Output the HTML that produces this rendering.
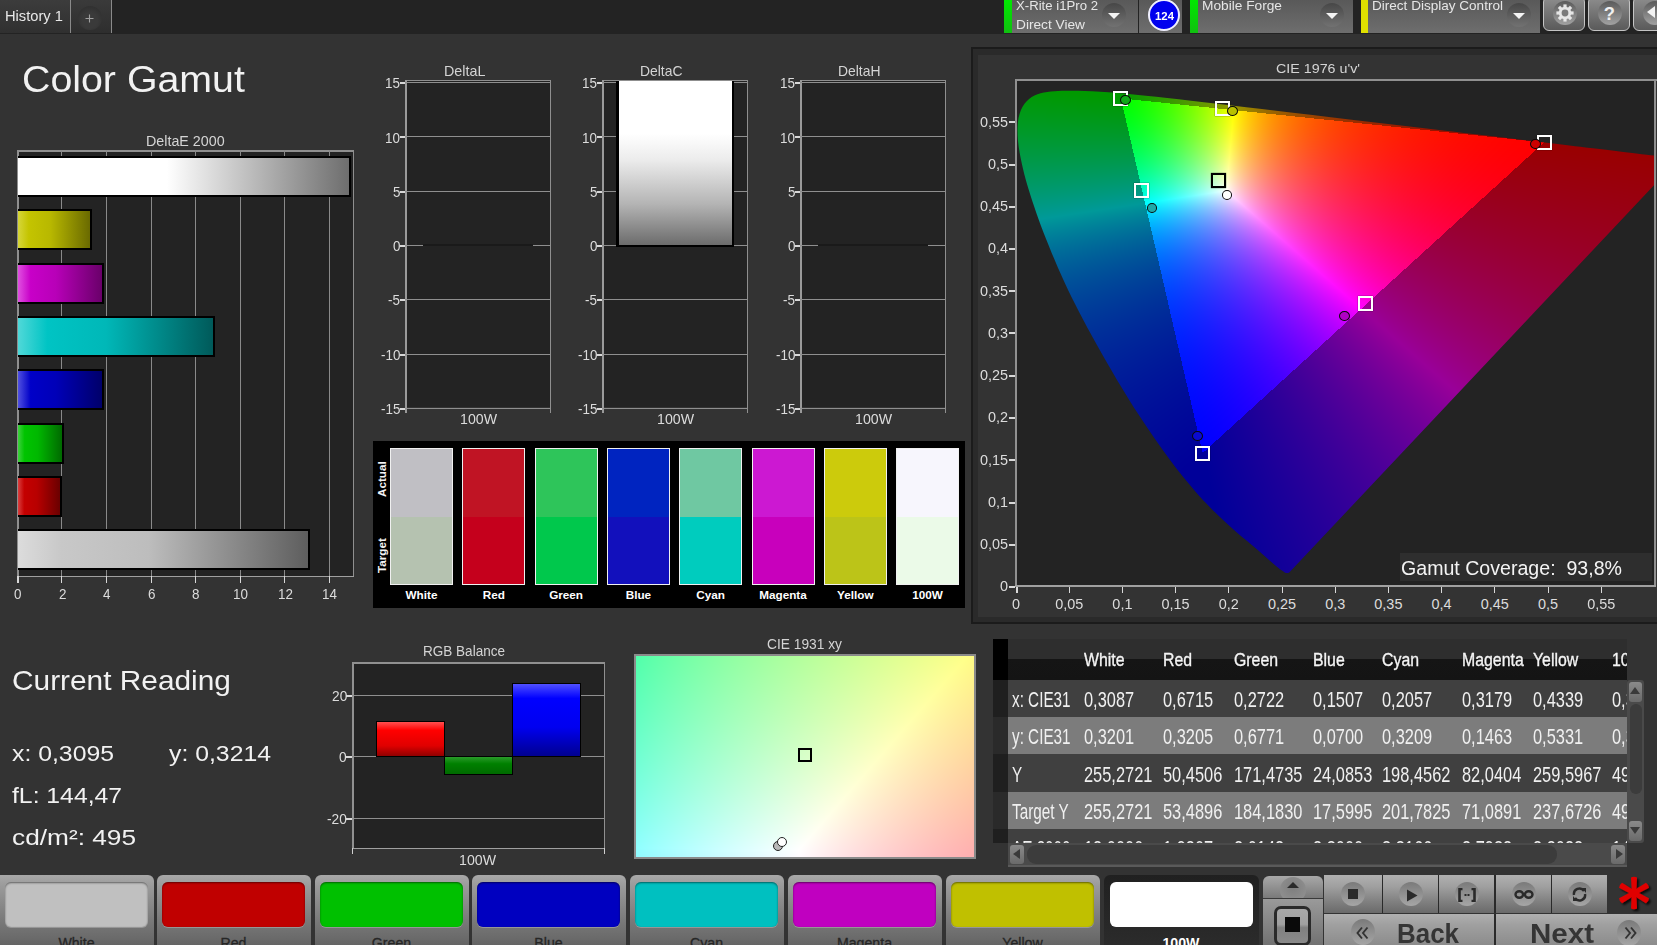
<!DOCTYPE html><html><head><meta charset="utf-8"><style>
html,body{margin:0;padding:0;}
body{width:1657px;height:945px;overflow:hidden;position:relative;background:#333333;font-family:"Liberation Sans",sans-serif;}
.t{position:absolute;white-space:nowrap;line-height:1;transform-origin:0 0;}
</style></head><body>
<div style="position:absolute;left:0px;top:0px;width:1657px;height:34px;background:#232323"></div>
<div style="position:absolute;left:0px;top:0px;width:70px;height:33px;background:linear-gradient(#3c3c3c,#303030)"></div>
<div style="position:absolute;left:70px;top:0px;width:1px;height:33px;background:#8a8a8a"></div>
<div style="position:absolute;left:71px;top:0px;width:40px;height:33px;background:linear-gradient(#3a3a3a,#2e2e2e)"></div>
<div style="position:absolute;left:111px;top:0px;width:1px;height:33px;background:#8a8a8a"></div>
<div style="position:absolute;left:78px;top:6px;width:24px;height:24px;border-radius:50%;background:radial-gradient(circle at 50% 60%,#3a3a3a 40%,#2a2a2a 100%)"></div>
<svg style="position:absolute;left:84px;top:13px" width="11" height="11" viewBox="0 0 11 11"><path d="M5.5 1.5 V9.5 M1.5 5.5 H9.5" stroke="#a0a0a0" stroke-width="1.1"/></svg>
<div class="t" style="left:5.00px;top:9.13px;font-size:14.03px;color:#e8e8e8;transform:scaleX(1.0480);">History 1</div>
<div style="position:absolute;left:1004px;top:0px;width:8px;height:33px;background:linear-gradient(#00e800,#10c010)"></div>
<div style="position:absolute;left:1012px;top:0px;width:126px;height:33px;background:linear-gradient(#595959,#6e6e6e)"></div>
<div class="t" style="left:1016.00px;top:-1.29px;font-size:13.33px;color:#e6e6e6;transform:scaleX(0.9881);">X-Rite i1Pro 2</div>
<div class="t" style="left:1016.00px;top:17.71px;font-size:13.33px;color:#e6e6e6;transform:scaleX(1.0271);">Direct View</div>
<div style="position:absolute;left:1102px;top:3px;width:24px;height:24px;border-radius:50%;background:linear-gradient(#474747,#727272)"></div>
<div style="position:absolute;left:1108px;top:13px;width:0;height:0;border-left:6px solid transparent;border-right:6px solid transparent;border-top:6px solid #f4f4f4"></div>
<div style="position:absolute;left:1139px;top:0px;width:43px;height:33px;background:linear-gradient(#595959,#6e6e6e)"></div>
<div style="position:absolute;left:1147.5px;top:-1px;width:32px;height:32px;box-sizing:border-box;border-radius:50%;background:#0000ee;border:2px solid #f0f0ff"></div>
<div class="t" style="left:1154.50px;top:9.62px;font-size:11.67px;color:#ffffff;font-weight:bold;transform:scaleX(0.9762);">124</div>
<div style="position:absolute;left:1190px;top:0px;width:8px;height:33px;background:linear-gradient(#00e800,#10c010)"></div>
<div style="position:absolute;left:1198px;top:0px;width:155px;height:33px;background:linear-gradient(#595959,#6e6e6e)"></div>
<div class="t" style="left:1202.00px;top:-1.29px;font-size:13.33px;color:#e6e6e6;transform:scaleX(1.0282);">Mobile Forge</div>
<div style="position:absolute;left:1320px;top:3px;width:24px;height:24px;border-radius:50%;background:linear-gradient(#474747,#727272)"></div>
<div style="position:absolute;left:1326px;top:13px;width:0;height:0;border-left:6px solid transparent;border-right:6px solid transparent;border-top:6px solid #f4f4f4"></div>
<div style="position:absolute;left:1361px;top:0px;width:7px;height:33px;background:#e0e000"></div>
<div style="position:absolute;left:1368px;top:0px;width:172px;height:33px;background:linear-gradient(#595959,#6e6e6e)"></div>
<div class="t" style="left:1372.00px;top:-1.29px;font-size:13.33px;color:#e6e6e6;transform:scaleX(1.0161);">Direct Display Control</div>
<div style="position:absolute;left:1507px;top:3px;width:24px;height:24px;border-radius:50%;background:linear-gradient(#474747,#727272)"></div>
<div style="position:absolute;left:1513px;top:13px;width:0;height:0;border-left:6px solid transparent;border-right:6px solid transparent;border-top:6px solid #f4f4f4"></div>
<div style="position:absolute;left:1543px;top:-4px;width:42px;height:35px;box-sizing:border-box;border:1.3px solid #c4c4c4;border-radius:6px;background:linear-gradient(#8e8e8e,#5a5a5a)"></div>
<div style="position:absolute;left:1552.5px;top:1px;width:24px;height:24px;border-radius:50%;background:linear-gradient(#5a5a5a,#a2a2a2)"></div>
<div style="position:absolute;left:1588px;top:-4px;width:42px;height:35px;box-sizing:border-box;border:1.3px solid #c4c4c4;border-radius:6px;background:linear-gradient(#8e8e8e,#5a5a5a)"></div>
<div style="position:absolute;left:1597.5px;top:1px;width:24px;height:24px;border-radius:50%;background:linear-gradient(#5a5a5a,#a2a2a2)"></div>
<div style="position:absolute;left:1633px;top:-4px;width:42px;height:35px;box-sizing:border-box;border:1.3px solid #c4c4c4;border-radius:6px;background:linear-gradient(#8e8e8e,#5a5a5a)"></div>
<div style="position:absolute;left:1642.5px;top:1px;width:24px;height:24px;border-radius:50%;background:linear-gradient(#5a5a5a,#a2a2a2)"></div>
<svg style="position:absolute;left:1552.5px;top:1px" width="24" height="24" viewBox="-12 -12 24 24"><g fill="#e6e6e6"><rect x="-1.6" y="-8.6" width="3.2" height="4" transform="rotate(0)"/><rect x="-1.6" y="-8.6" width="3.2" height="4" transform="rotate(45)"/><rect x="-1.6" y="-8.6" width="3.2" height="4" transform="rotate(90)"/><rect x="-1.6" y="-8.6" width="3.2" height="4" transform="rotate(135)"/><rect x="-1.6" y="-8.6" width="3.2" height="4" transform="rotate(180)"/><rect x="-1.6" y="-8.6" width="3.2" height="4" transform="rotate(225)"/><rect x="-1.6" y="-8.6" width="3.2" height="4" transform="rotate(270)"/><rect x="-1.6" y="-8.6" width="3.2" height="4" transform="rotate(315)"/><circle r="6.2"/></g><circle r="3.4" fill="#7a7a7a"/></svg>
<div class="t" style="left:1603.80px;top:4.68px;font-size:18.33px;color:#f0f0f0;font-weight:bold;">?</div>
<div style="position:absolute;left:1647px;top:6px;width:0;height:0;border-top:6.5px solid transparent;border-bottom:6.5px solid transparent;border-right:8px solid #f2f2f2"></div>
<div class="t" style="left:22.00px;top:61.73px;font-size:36.94px;color:#f2f2f2;transform:scaleX(1.0649);">Color Gamut</div>
<div class="t" style="left:146.25px;top:133.18px;font-size:15.14px;color:#d4d4d4;transform:scaleX(0.9446);">DeltaE 2000</div>
<div style="position:absolute;left:17px;top:150px;width:336px;height:426px;background:#232323"></div>
<div style="position:absolute;left:17px;top:150px;width:337px;height:2px;background:#8f8f8f"></div>
<div style="position:absolute;left:17px;top:150px;width:2px;height:426px;background:#8f8f8f"></div>
<div style="position:absolute;left:353px;top:150px;width:1px;height:426px;background:#8f8f8f"></div>
<div style="position:absolute;left:17px;top:576px;width:337px;height:1px;background:#a0a0a0"></div>
<div style="position:absolute;left:61px;top:150px;width:1px;height:426px;background:#8a8a8a"></div>
<div style="position:absolute;left:106px;top:150px;width:1px;height:426px;background:#8a8a8a"></div>
<div style="position:absolute;left:151px;top:150px;width:1px;height:426px;background:#8a8a8a"></div>
<div style="position:absolute;left:195px;top:150px;width:1px;height:426px;background:#8a8a8a"></div>
<div style="position:absolute;left:240px;top:150px;width:1px;height:426px;background:#8a8a8a"></div>
<div style="position:absolute;left:284px;top:150px;width:1px;height:426px;background:#8a8a8a"></div>
<div style="position:absolute;left:329px;top:150px;width:1px;height:426px;background:#8a8a8a"></div>
<div style="position:absolute;left:17px;top:576px;width:2px;height:7px;background:#d8d8d8"></div>
<div class="t" style="left:13.96px;top:586.07px;font-size:15.28px;color:#dcdcdc;transform:scaleX(0.8800);">0</div>
<div style="position:absolute;left:61px;top:576px;width:1px;height:7px;background:#d8d8d8"></div>
<div class="t" style="left:58.56px;top:586.07px;font-size:15.28px;color:#dcdcdc;transform:scaleX(0.8800);">2</div>
<div style="position:absolute;left:106px;top:576px;width:1px;height:7px;background:#d8d8d8"></div>
<div class="t" style="left:103.16px;top:586.07px;font-size:15.28px;color:#dcdcdc;transform:scaleX(0.8800);">4</div>
<div style="position:absolute;left:151px;top:576px;width:1px;height:7px;background:#d8d8d8"></div>
<div class="t" style="left:147.76px;top:586.07px;font-size:15.28px;color:#dcdcdc;transform:scaleX(0.8800);">6</div>
<div style="position:absolute;left:195px;top:576px;width:1px;height:7px;background:#d8d8d8"></div>
<div class="t" style="left:192.36px;top:586.07px;font-size:15.28px;color:#dcdcdc;transform:scaleX(0.8800);">8</div>
<div style="position:absolute;left:240px;top:576px;width:1px;height:7px;background:#d8d8d8"></div>
<div class="t" style="left:233.22px;top:586.07px;font-size:15.28px;color:#dcdcdc;transform:scaleX(0.8800);">10</div>
<div style="position:absolute;left:284px;top:576px;width:1px;height:7px;background:#d8d8d8"></div>
<div class="t" style="left:277.82px;top:586.07px;font-size:15.28px;color:#dcdcdc;transform:scaleX(0.8800);">12</div>
<div style="position:absolute;left:329px;top:576px;width:1px;height:7px;background:#d8d8d8"></div>
<div class="t" style="left:322.42px;top:586.07px;font-size:15.28px;color:#dcdcdc;transform:scaleX(0.8800);">14</div>
<div style="position:absolute;left:18px;top:156px;width:333px;height:41px;box-sizing:border-box;border:2px solid #000;border-left:none;background:linear-gradient(to right,#ffffff 0%,#ffffff 8%,#ffffff 45%,#6e6e6e 100%)"></div>
<div style="position:absolute;left:18px;top:209px;width:74px;height:41px;box-sizing:border-box;border:2px solid #000;border-left:none;background:linear-gradient(to right,#d6d63a 0%,#c4c400 15%,#b8b800 45%,#6a6a00 100%)"></div>
<div style="position:absolute;left:18px;top:263px;width:86px;height:41px;box-sizing:border-box;border:2px solid #000;border-left:none;background:linear-gradient(to right,#e050e0 0%,#c800c8 15%,#b800b8 45%,#6a006a 100%)"></div>
<div style="position:absolute;left:18px;top:316px;width:197px;height:41px;box-sizing:border-box;border:2px solid #000;border-left:none;background:linear-gradient(to right,#50d8d8 0%,#00c4c4 15%,#00b8b8 45%,#005a5a 100%)"></div>
<div style="position:absolute;left:18px;top:369px;width:86px;height:41px;box-sizing:border-box;border:2px solid #000;border-left:none;background:linear-gradient(to right,#5050e0 0%,#0000c8 15%,#0000b8 45%,#00006a 100%)"></div>
<div style="position:absolute;left:18px;top:423px;width:46px;height:41px;box-sizing:border-box;border:2px solid #000;border-left:none;background:linear-gradient(to right,#40d040 0%,#00c400 15%,#00b800 45%,#006a00 100%)"></div>
<div style="position:absolute;left:18px;top:476px;width:44px;height:41px;box-sizing:border-box;border:2px solid #000;border-left:none;background:linear-gradient(to right,#d84040 0%,#c40000 15%,#b80000 45%,#6a0000 100%)"></div>
<div style="position:absolute;left:18px;top:529px;width:292px;height:41px;box-sizing:border-box;border:2px solid #000;border-left:none;background:linear-gradient(to right,#dcdcdc 0%,#c8c8c8 15%,#bdbdbd 45%,#5e5e5e 100%)"></div>
<div class="t" style="left:443.80px;top:63.30px;font-size:15.00px;color:#d4d4d4;transform:scaleX(0.9549);">DeltaL</div>
<div style="position:absolute;left:405px;top:80px;width:145px;height:327px;background:#232323"></div>
<div style="position:absolute;left:405px;top:80px;width:146px;height:1px;background:#8f8f8f"></div>
<div style="position:absolute;left:405px;top:80px;width:2px;height:333px;background:#9a9a9a"></div>
<div style="position:absolute;left:550px;top:80px;width:1px;height:333px;background:#8f8f8f"></div>
<div style="position:absolute;left:400px;top:82px;width:150px;height:1px;background:#8f8f8f"></div>
<div style="position:absolute;left:400px;top:82px;width:5px;height:2px;background:#d8d8d8"></div>
<div class="t" style="left:385.05px;top:75.27px;font-size:15.28px;color:#dcdcdc;transform:scaleX(0.8800);">15</div>
<div style="position:absolute;left:400px;top:136px;width:150px;height:1px;background:#8f8f8f"></div>
<div style="position:absolute;left:400px;top:136px;width:5px;height:2px;background:#d8d8d8"></div>
<div class="t" style="left:385.05px;top:129.57px;font-size:15.28px;color:#dcdcdc;transform:scaleX(0.8800);">10</div>
<div style="position:absolute;left:400px;top:191px;width:150px;height:1px;background:#8f8f8f"></div>
<div style="position:absolute;left:400px;top:191px;width:5px;height:2px;background:#d8d8d8"></div>
<div class="t" style="left:392.52px;top:183.87px;font-size:15.28px;color:#dcdcdc;transform:scaleX(0.8800);">5</div>
<div style="position:absolute;left:400px;top:245px;width:150px;height:1px;background:#8f8f8f"></div>
<div style="position:absolute;left:400px;top:245px;width:5px;height:2px;background:#d8d8d8"></div>
<div class="t" style="left:392.52px;top:238.17px;font-size:15.28px;color:#dcdcdc;transform:scaleX(0.8800);">0</div>
<div style="position:absolute;left:400px;top:299px;width:150px;height:1px;background:#8f8f8f"></div>
<div style="position:absolute;left:400px;top:299px;width:5px;height:2px;background:#d8d8d8"></div>
<div class="t" style="left:388.05px;top:292.47px;font-size:15.28px;color:#dcdcdc;transform:scaleX(0.8800);">-5</div>
<div style="position:absolute;left:400px;top:354px;width:150px;height:1px;background:#8f8f8f"></div>
<div style="position:absolute;left:400px;top:354px;width:5px;height:2px;background:#d8d8d8"></div>
<div class="t" style="left:380.57px;top:346.77px;font-size:15.28px;color:#dcdcdc;transform:scaleX(0.8800);">-10</div>
<div style="position:absolute;left:400px;top:408px;width:150px;height:1px;background:#8f8f8f"></div>
<div style="position:absolute;left:400px;top:408px;width:5px;height:2px;background:#d8d8d8"></div>
<div class="t" style="left:380.57px;top:401.07px;font-size:15.28px;color:#dcdcdc;transform:scaleX(0.8800);">-15</div>
<div class="t" style="left:459.50px;top:411.54px;font-size:14.72px;color:#dcdcdc;transform:scaleX(0.9621);">100W</div>
<div style="position:absolute;left:423px;top:244px;width:110px;height:2px;background:#1a1a1a"></div>
<div class="t" style="left:640.25px;top:63.30px;font-size:15.00px;color:#d4d4d4;transform:scaleX(0.9270);">DeltaC</div>
<div style="position:absolute;left:602px;top:80px;width:145px;height:327px;background:#232323"></div>
<div style="position:absolute;left:602px;top:80px;width:146px;height:1px;background:#8f8f8f"></div>
<div style="position:absolute;left:602px;top:80px;width:2px;height:333px;background:#9a9a9a"></div>
<div style="position:absolute;left:747px;top:80px;width:1px;height:333px;background:#8f8f8f"></div>
<div style="position:absolute;left:597px;top:82px;width:150px;height:1px;background:#8f8f8f"></div>
<div style="position:absolute;left:597px;top:82px;width:5px;height:2px;background:#d8d8d8"></div>
<div class="t" style="left:582.05px;top:75.27px;font-size:15.28px;color:#dcdcdc;transform:scaleX(0.8800);">15</div>
<div style="position:absolute;left:597px;top:136px;width:150px;height:1px;background:#8f8f8f"></div>
<div style="position:absolute;left:597px;top:136px;width:5px;height:2px;background:#d8d8d8"></div>
<div class="t" style="left:582.05px;top:129.57px;font-size:15.28px;color:#dcdcdc;transform:scaleX(0.8800);">10</div>
<div style="position:absolute;left:597px;top:191px;width:150px;height:1px;background:#8f8f8f"></div>
<div style="position:absolute;left:597px;top:191px;width:5px;height:2px;background:#d8d8d8"></div>
<div class="t" style="left:589.52px;top:183.87px;font-size:15.28px;color:#dcdcdc;transform:scaleX(0.8800);">5</div>
<div style="position:absolute;left:597px;top:245px;width:150px;height:1px;background:#8f8f8f"></div>
<div style="position:absolute;left:597px;top:245px;width:5px;height:2px;background:#d8d8d8"></div>
<div class="t" style="left:589.52px;top:238.17px;font-size:15.28px;color:#dcdcdc;transform:scaleX(0.8800);">0</div>
<div style="position:absolute;left:597px;top:299px;width:150px;height:1px;background:#8f8f8f"></div>
<div style="position:absolute;left:597px;top:299px;width:5px;height:2px;background:#d8d8d8"></div>
<div class="t" style="left:585.05px;top:292.47px;font-size:15.28px;color:#dcdcdc;transform:scaleX(0.8800);">-5</div>
<div style="position:absolute;left:597px;top:354px;width:150px;height:1px;background:#8f8f8f"></div>
<div style="position:absolute;left:597px;top:354px;width:5px;height:2px;background:#d8d8d8"></div>
<div class="t" style="left:577.57px;top:346.77px;font-size:15.28px;color:#dcdcdc;transform:scaleX(0.8800);">-10</div>
<div style="position:absolute;left:597px;top:408px;width:150px;height:1px;background:#8f8f8f"></div>
<div style="position:absolute;left:597px;top:408px;width:5px;height:2px;background:#d8d8d8"></div>
<div class="t" style="left:577.57px;top:401.07px;font-size:15.28px;color:#dcdcdc;transform:scaleX(0.8800);">-15</div>
<div class="t" style="left:656.50px;top:411.54px;font-size:14.72px;color:#dcdcdc;transform:scaleX(0.9621);">100W</div>
<div style="position:absolute;left:616px;top:81px;width:118px;height:166px;box-sizing:border-box;border:2px solid #000;border-left-width:3px;border-top:none;background:linear-gradient(#ffffff 0%,#ffffff 32%,#ececec 48%,#b4b4b4 75%,#6c6c6c 100%)"></div>
<div class="t" style="left:838.25px;top:63.30px;font-size:15.00px;color:#d4d4d4;transform:scaleX(0.9270);">DeltaH</div>
<div style="position:absolute;left:800px;top:80px;width:145px;height:327px;background:#232323"></div>
<div style="position:absolute;left:800px;top:80px;width:146px;height:1px;background:#8f8f8f"></div>
<div style="position:absolute;left:800px;top:80px;width:2px;height:333px;background:#9a9a9a"></div>
<div style="position:absolute;left:945px;top:80px;width:1px;height:333px;background:#8f8f8f"></div>
<div style="position:absolute;left:795px;top:82px;width:150px;height:1px;background:#8f8f8f"></div>
<div style="position:absolute;left:795px;top:82px;width:5px;height:2px;background:#d8d8d8"></div>
<div class="t" style="left:780.05px;top:75.27px;font-size:15.28px;color:#dcdcdc;transform:scaleX(0.8800);">15</div>
<div style="position:absolute;left:795px;top:136px;width:150px;height:1px;background:#8f8f8f"></div>
<div style="position:absolute;left:795px;top:136px;width:5px;height:2px;background:#d8d8d8"></div>
<div class="t" style="left:780.05px;top:129.57px;font-size:15.28px;color:#dcdcdc;transform:scaleX(0.8800);">10</div>
<div style="position:absolute;left:795px;top:191px;width:150px;height:1px;background:#8f8f8f"></div>
<div style="position:absolute;left:795px;top:191px;width:5px;height:2px;background:#d8d8d8"></div>
<div class="t" style="left:787.52px;top:183.87px;font-size:15.28px;color:#dcdcdc;transform:scaleX(0.8800);">5</div>
<div style="position:absolute;left:795px;top:245px;width:150px;height:1px;background:#8f8f8f"></div>
<div style="position:absolute;left:795px;top:245px;width:5px;height:2px;background:#d8d8d8"></div>
<div class="t" style="left:787.52px;top:238.17px;font-size:15.28px;color:#dcdcdc;transform:scaleX(0.8800);">0</div>
<div style="position:absolute;left:795px;top:299px;width:150px;height:1px;background:#8f8f8f"></div>
<div style="position:absolute;left:795px;top:299px;width:5px;height:2px;background:#d8d8d8"></div>
<div class="t" style="left:783.05px;top:292.47px;font-size:15.28px;color:#dcdcdc;transform:scaleX(0.8800);">-5</div>
<div style="position:absolute;left:795px;top:354px;width:150px;height:1px;background:#8f8f8f"></div>
<div style="position:absolute;left:795px;top:354px;width:5px;height:2px;background:#d8d8d8"></div>
<div class="t" style="left:775.57px;top:346.77px;font-size:15.28px;color:#dcdcdc;transform:scaleX(0.8800);">-10</div>
<div style="position:absolute;left:795px;top:408px;width:150px;height:1px;background:#8f8f8f"></div>
<div style="position:absolute;left:795px;top:408px;width:5px;height:2px;background:#d8d8d8"></div>
<div class="t" style="left:775.57px;top:401.07px;font-size:15.28px;color:#dcdcdc;transform:scaleX(0.8800);">-15</div>
<div class="t" style="left:854.50px;top:411.54px;font-size:14.72px;color:#dcdcdc;transform:scaleX(0.9621);">100W</div>
<div style="position:absolute;left:818px;top:244px;width:110px;height:2px;background:#1a1a1a"></div>
<div style="position:absolute;left:373px;top:441px;width:592px;height:167px;background:#000"></div>
<div style="position:absolute;left:390.0px;top:448px;width:63px;height:137px;box-sizing:border-box;border:1px solid #f0f0f0;background:linear-gradient(#c0bfc4 0%,#c0bfc4 50%,#b5c2b0 50%,#b5c2b0 100%)"></div>
<div class="t" style="left:405.53px;top:589.47px;font-size:11.74px;color:#ffffff;font-weight:bold;">White</div>
<div style="position:absolute;left:462.3px;top:448px;width:63px;height:137px;box-sizing:border-box;border:1px solid #f0f0f0;background:linear-gradient(#c01424 0%,#c01424 50%,#c5001c 50%,#c5001c 100%)"></div>
<div class="t" style="left:482.71px;top:589.47px;font-size:11.74px;color:#ffffff;font-weight:bold;">Red</div>
<div style="position:absolute;left:534.6px;top:448px;width:63px;height:137px;box-sizing:border-box;border:1px solid #f0f0f0;background:linear-gradient(#2ec55a 0%,#2ec55a 50%,#00c84c 50%,#00c84c 100%)"></div>
<div class="t" style="left:549.14px;top:589.47px;font-size:11.74px;color:#ffffff;font-weight:bold;">Green</div>
<div style="position:absolute;left:606.9px;top:448px;width:63px;height:137px;box-sizing:border-box;border:1px solid #f0f0f0;background:linear-gradient(#0024c0 0%,#0024c0 50%,#1210bc 50%,#1210bc 100%)"></div>
<div class="t" style="left:625.68px;top:589.47px;font-size:11.74px;color:#ffffff;font-weight:bold;">Blue</div>
<div style="position:absolute;left:679.2px;top:448px;width:63px;height:137px;box-sizing:border-box;border:1px solid #f0f0f0;background:linear-gradient(#6fc8a2 0%,#6fc8a2 50%,#00ccbe 50%,#00ccbe 100%)"></div>
<div class="t" style="left:696.35px;top:589.47px;font-size:11.74px;color:#ffffff;font-weight:bold;">Cyan</div>
<div style="position:absolute;left:751.5px;top:448px;width:63px;height:137px;box-sizing:border-box;border:1px solid #f0f0f0;background:linear-gradient(#cc18d2 0%,#cc18d2 50%,#c800bc 50%,#c800bc 100%)"></div>
<div class="t" style="left:759.20px;top:589.47px;font-size:11.74px;color:#ffffff;font-weight:bold;">Magenta</div>
<div style="position:absolute;left:823.8px;top:448px;width:63px;height:137px;box-sizing:border-box;border:1px solid #f0f0f0;background:linear-gradient(#cccb0c 0%,#cccb0c 50%,#bcc418 50%,#bcc418 100%)"></div>
<div class="t" style="left:837.04px;top:589.47px;font-size:11.74px;color:#ffffff;font-weight:bold;">Yellow</div>
<div style="position:absolute;left:896.1px;top:448px;width:63px;height:137px;box-sizing:border-box;border:1px solid #f0f0f0;background:linear-gradient(#f7f6fd 0%,#f7f6fd 50%,#ebfae8 50%,#ebfae8 100%)"></div>
<div class="t" style="left:912.27px;top:589.47px;font-size:11.74px;color:#ffffff;font-weight:bold;">100W</div>
<div class="t" style="left:376.4px;top:496.6px;font-size:11.7px;font-weight:bold;color:#f4f4f4;transform:rotate(-90deg);transform-origin:0 0;">Actual</div>
<div class="t" style="left:376.4px;top:573px;font-size:11.7px;font-weight:bold;color:#f4f4f4;transform:rotate(-90deg);transform-origin:0 0;">Target</div>
<div style="position:absolute;left:971px;top:47px;width:686px;height:577px;background:#1b1b1b"></div>
<div style="position:absolute;left:973px;top:49px;width:684px;height:573px;background:#2a2a2a"></div>
<div style="position:absolute;left:978px;top:55px;width:679px;height:562px;background:#333333"></div>
<div class="t" style="left:1276.00px;top:62.48px;font-size:13.61px;color:#d4d4d4;transform:scaleX(1.0487);">CIE 1976 u'v'</div>
<div style="position:absolute;left:1015px;top:79px;width:641px;height:508px;background:#232323"></div>
<div style="position:absolute;left:1015px;top:79px;width:642px;height:2px;background:#909090"></div>
<div style="position:absolute;left:1015px;top:79px;width:2px;height:508px;background:#909090"></div>
<div style="position:absolute;left:1654px;top:79px;width:2px;height:508px;background:#909090"></div>
<div style="position:absolute;left:1015px;top:585px;width:641px;height:2px;background:#a0a0a0"></div>
<svg id="ciefb" style="position:absolute;left:1017px;top:81px" width="637" height="504" viewBox="2 2 637 504"><defs><linearGradient id="fg1" x1="0" y1="0" x2="0" y2="1"><stop offset="0" stop-color="#009000"/><stop offset="0.3" stop-color="#009030"/><stop offset="0.4" stop-color="#008f8a"/><stop offset="0.75" stop-color="#0020a0"/><stop offset="1" stop-color="#1000a0"/></linearGradient><linearGradient id="fg2" x1="0" y1="1" x2="1" y2="0"><stop offset="0" stop-color="#1800a0"/><stop offset="0.5" stop-color="#980098"/><stop offset="1" stop-color="#a00010"/></linearGradient><linearGradient id="fg3" x1="0" y1="0" x2="1" y2="0.4"><stop offset="0" stop-color="#00ff00"/><stop offset="0.35" stop-color="#ffff00"/><stop offset="1" stop-color="#ff0000"/></linearGradient><linearGradient id="fg4" x1="0" y1="0" x2="0" y2="1"><stop offset="0.45" stop-color="#0000ff" stop-opacity="0"/><stop offset="1" stop-color="#0000ff"/></linearGradient><radialGradient id="fg5" gradientUnits="userSpaceOnUse" cx="211.5" cy="111.8" r="150"><stop offset="0" stop-color="#ffffff"/><stop offset="1" stop-color="#ffffff" stop-opacity="0"/></radialGradient></defs><polygon points="274.24,493.48 274.06,493.48 273.83,493.76 273.47,493.76 273.06,494.03 272.53,494.04 271.82,494.04 270.94,494.05 269.35,493.23 266.59,491.34 262.87,488.38 257.49,483.88 250.71,477.92 242.13,470.59 230.89,461.07 217.35,449.38 200.73,433.89 180.78,412.91 154.30,379.92 123.03,334.80 89.12,278.65 56.47,217.93 30.96,159.63 13.65,110.48 4.70,73.96 2.53,48.53 5.94,31.05 14.07,19.96 25.60,14.30 39.31,12.21 54.26,11.69 69.45,11.89 85.29,12.65 102.37,13.92 120.91,15.65 141.30,17.78 163.90,20.28 188.89,23.16 216.56,26.39 246.97,29.98 280.13,33.93 315.90,38.18 353.75,42.65 392.62,47.29 430.30,51.76 466.97,56.11 500.20,60.02 529.56,63.52 554.55,66.50 575.47,68.96 593.12,71.07 608.42,72.89 621.35,74.43 631.81,75.65 639.93,76.61 646.25,77.37 650.97,77.93 654.06,78.30 656.60,78.60 658.58,78.83 660.57,79.07 662.28,79.28 663.43,79.41 664.00,79.48 664.29,79.52" fill="url(#fg1)"/><polygon points="187.6,374.1 529.2,63.4 664.3,79.5 274.2,493.5" fill="url(#fg2)"/><polygon points="529.2,63.4 105.9,19.3 187.6,374.1" fill="url(#fg3)"/><polygon points="529.2,63.4 105.9,19.3 187.6,374.1" fill="url(#fg4)"/><polygon points="529.2,63.4 105.9,19.3 187.6,374.1" fill="url(#fg5)"/></svg>
<canvas id="cie" width="637" height="504" style="position:absolute;left:1017px;top:81px"></canvas>
<script>
(function(){
var L=[[0.1741,0.005],[0.174,0.005],[0.1738,0.0049],[0.1736,0.0049],[0.1733,0.0048],[0.173,0.0048],[0.1726,0.0048],[0.1721,0.0048],[0.1714,0.0051],[0.1703,0.0058],[0.1689,0.0069],[0.1669,0.0086],[0.1644,0.0109],[0.1611,0.0138],[0.1566,0.0177],[0.151,0.0227],[0.144,0.0297],[0.1355,0.0399],[0.1241,0.0578],[0.1096,0.0868],[0.0913,0.1327],[0.0687,0.2007],[0.0454,0.295],[0.0235,0.4127],[0.0082,0.5384],[0.0039,0.6548],[0.0139,0.7502],[0.0389,0.812],[0.0743,0.8338],[0.1142,0.8262],[0.1547,0.8059],[0.1929,0.7816],[0.2296,0.7543],[0.2658,0.7243],[0.3016,0.6923],[0.3373,0.6589],[0.3731,0.6245],[0.4087,0.5896],[0.4441,0.5547],[0.4788,0.5202],[0.5125,0.4866],[0.5448,0.4544],[0.5752,0.4242],[0.6029,0.3965],[0.627,0.3725],[0.6482,0.3514],[0.6658,0.334],[0.6801,0.3197],[0.6915,0.3083],[0.7006,0.2993],[0.7079,0.292],[0.714,0.2859],[0.719,0.2809],[0.723,0.277],[0.726,0.274],[0.7283,0.2717],[0.73,0.27],[0.7311,0.2689],[0.732,0.268],[0.7327,0.2673],[0.7334,0.2666],[0.734,0.266],[0.7344,0.2656],[0.7346,0.2654],[0.7347,0.2653]];
var cv=document.getElementById('cie');var ctx=cv.getContext('2d');
var OX=1017,OY=81,U0=1016.000000,SU=1064.000000,V0=586.500000,SV=845.000000;
function uv(x,y){var d=-2*x+12*y+3;return [4*x/d,9*y/d];}
ctx.beginPath();
var P=[];for(var i=0;i<L.length;i++){var p=uv(L[i][0],L[i][1]);P.push([U0+SU*p[0]-OX,V0-SV*p[1]-OY]);}
var n=P.length;ctx.moveTo(P[0][0],P[0][1]);
for(var i=0;i<n-1;i++){var p0=P[Math.max(i-1,0)],p1=P[i],p2=P[i+1],p3=P[Math.min(i+2,n-1)];
ctx.bezierCurveTo(p1[0]+(p2[0]-p0[0])/6,p1[1]+(p2[1]-p0[1])/6,p2[0]-(p3[0]-p1[0])/6,p2[1]-(p3[1]-p1[1])/6,p2[0],p2[1]);}
ctx.closePath();
var W=cv.width,H=cv.height;
var off=document.createElement('canvas');off.width=W;off.height=H;var oc=off.getContext('2d');
var img=oc.createImageData(W,H);var d=img.data;
// P3 D65 XYZ->RGB
var M=[[2.4934969,-0.9313836,-0.4027108],[-0.8294890,1.7626641,0.0236247],[0.0358458,-0.0761724,0.9568845]];
var GAM=1.250000, DARK=0.600000;
for(var py=0;py<H;py++){for(var pxx=0;pxx<W;pxx++){
  var u=(pxx+OX+0.5-U0)/SU, v=(V0-(py+OY+0.5))/SV;
  if(v<=0.0001)v=0.0001;
  var x=9*u/(6*u-16*v+12), y=4*v/(6*u-16*v+12);
  var X=x/y, Y=1, Z=(1-x-y)/y;
  var r=M[0][0]*X+M[0][1]*Y+M[0][2]*Z, g=M[1][0]*X+M[1][1]*Y+M[1][2]*Z, b=M[2][0]*X+M[2][1]*Y+M[2][2]*Z;
  var inside=(r>=0&&g>=0&&b>=0);
  if(r<0)r=0;if(g<0)g=0;if(b<0)b=0;
  var m=Math.max(r,g,b); if(m<=0)m=1;
  r/=m;g/=m;b/=m;
  if(inside){r=Math.pow(r,GAM);g=Math.pow(g,GAM);b=Math.pow(b,GAM);}
  var k=inside?1:DARK;
  var o=(py*W+pxx)*4;d[o]=r*255*k;d[o+1]=g*255*k;d[o+2]=b*255*k;d[o+3]=255;
}}
oc.putImageData(img,0,0);
ctx.save();ctx.clip();ctx.drawImage(off,0,0);ctx.restore();var fb=document.getElementById('ciefb');if(fb)fb.style.display='none';
})();
</script>
<div style="position:absolute;left:1536.7px;top:134.9px;width:15px;height:15px;box-sizing:border-box;border:2px solid #ffffff;box-shadow:0 0 1px rgba(0,0,0,0.8)"></div>
<div style="position:absolute;left:1113.4px;top:90.8px;width:15px;height:15px;box-sizing:border-box;border:2px solid #ffffff;box-shadow:0 0 1px rgba(0,0,0,0.8)"></div>
<div style="position:absolute;left:1195.1px;top:445.6px;width:15px;height:15px;box-sizing:border-box;border:2px solid #ffffff;box-shadow:0 0 1px rgba(0,0,0,0.8)"></div>
<div style="position:absolute;left:1134.0px;top:182.9px;width:15px;height:15px;box-sizing:border-box;border:2px solid #ffffff;box-shadow:0 0 1px rgba(0,0,0,0.8)"></div>
<div style="position:absolute;left:1357.5px;top:296.0px;width:15px;height:15px;box-sizing:border-box;border:2px solid #ffffff;box-shadow:0 0 1px rgba(0,0,0,0.8)"></div>
<div style="position:absolute;left:1214.5px;top:101.0px;width:15px;height:15px;box-sizing:border-box;border:2px solid #ffffff;box-shadow:0 0 1px rgba(0,0,0,0.8)"></div>
<div style="position:absolute;left:1210.9px;top:172.9px;width:15px;height:15px;box-sizing:border-box;border:2px solid #000000;box-shadow:0 0 1px rgba(0,0,0,0.8)"></div>
<div style="position:absolute;left:1221.8px;top:190.4px;width:10.5px;height:10px;box-sizing:border-box;border-radius:50%;border:1.6px solid #0a0a0a;background:#ffffff"></div>
<div style="position:absolute;left:1530.1px;top:138.6px;width:10.5px;height:10px;box-sizing:border-box;border-radius:50%;border:1.6px solid #0a0a0a;background:#cc0000"></div>
<div style="position:absolute;left:1120.2px;top:94.8px;width:10.5px;height:10px;box-sizing:border-box;border-radius:50%;border:1.6px solid #0a0a0a;background:#10a818"></div>
<div style="position:absolute;left:1192.0px;top:431.1px;width:10.5px;height:10px;box-sizing:border-box;border-radius:50%;border:1.6px solid #0a0a0a;background:#0a0ad0"></div>
<div style="position:absolute;left:1146.7px;top:202.5px;width:10.5px;height:10px;box-sizing:border-box;border-radius:50%;border:1.6px solid #0a0a0a;background:#20a8a8"></div>
<div style="position:absolute;left:1339.2px;top:311.4px;width:10.5px;height:10px;box-sizing:border-box;border-radius:50%;border:1.6px solid #0a0a0a;background:#b000c4"></div>
<div style="position:absolute;left:1227.3px;top:106.2px;width:10.5px;height:10px;box-sizing:border-box;border-radius:50%;border:1.6px solid #0a0a0a;background:#b8c000"></div>
<div style="position:absolute;left:1009px;top:586px;width:6px;height:2px;background:#d8d8d8"></div>
<div class="t" style="left:999.97px;top:579.47px;font-size:14.44px;color:#dcdcdc;">0</div>
<div style="position:absolute;left:1016px;top:587px;width:2px;height:6px;background:#d8d8d8"></div>
<div class="t" style="left:1011.98px;top:596.77px;font-size:14.44px;color:#dcdcdc;">0</div>
<div style="position:absolute;left:1009px;top:544px;width:6px;height:2px;background:#d8d8d8"></div>
<div class="t" style="left:979.89px;top:537.22px;font-size:14.44px;color:#dcdcdc;">0,05</div>
<div style="position:absolute;left:1069px;top:587px;width:1px;height:6px;background:#d8d8d8"></div>
<div class="t" style="left:1055.14px;top:596.77px;font-size:14.44px;color:#dcdcdc;">0,05</div>
<div style="position:absolute;left:1009px;top:502px;width:6px;height:2px;background:#d8d8d8"></div>
<div class="t" style="left:987.92px;top:494.97px;font-size:14.44px;color:#dcdcdc;">0,1</div>
<div style="position:absolute;left:1122px;top:587px;width:1px;height:6px;background:#d8d8d8"></div>
<div class="t" style="left:1112.36px;top:596.77px;font-size:14.44px;color:#dcdcdc;">0,1</div>
<div style="position:absolute;left:1009px;top:459px;width:6px;height:2px;background:#d8d8d8"></div>
<div class="t" style="left:979.89px;top:452.72px;font-size:14.44px;color:#dcdcdc;">0,15</div>
<div style="position:absolute;left:1175px;top:587px;width:1px;height:6px;background:#d8d8d8"></div>
<div class="t" style="left:1161.54px;top:596.77px;font-size:14.44px;color:#dcdcdc;">0,15</div>
<div style="position:absolute;left:1009px;top:417px;width:6px;height:2px;background:#d8d8d8"></div>
<div class="t" style="left:987.92px;top:410.47px;font-size:14.44px;color:#dcdcdc;">0,2</div>
<div style="position:absolute;left:1228px;top:587px;width:1px;height:6px;background:#d8d8d8"></div>
<div class="t" style="left:1218.76px;top:596.77px;font-size:14.44px;color:#dcdcdc;">0,2</div>
<div style="position:absolute;left:1009px;top:375px;width:6px;height:2px;background:#d8d8d8"></div>
<div class="t" style="left:979.89px;top:368.22px;font-size:14.44px;color:#dcdcdc;">0,25</div>
<div style="position:absolute;left:1282px;top:587px;width:1px;height:6px;background:#d8d8d8"></div>
<div class="t" style="left:1267.94px;top:596.77px;font-size:14.44px;color:#dcdcdc;">0,25</div>
<div style="position:absolute;left:1009px;top:332px;width:6px;height:2px;background:#d8d8d8"></div>
<div class="t" style="left:987.92px;top:325.97px;font-size:14.44px;color:#dcdcdc;">0,3</div>
<div style="position:absolute;left:1335px;top:587px;width:1px;height:6px;background:#d8d8d8"></div>
<div class="t" style="left:1325.16px;top:596.77px;font-size:14.44px;color:#dcdcdc;">0,3</div>
<div style="position:absolute;left:1009px;top:290px;width:6px;height:2px;background:#d8d8d8"></div>
<div class="t" style="left:979.89px;top:283.72px;font-size:14.44px;color:#dcdcdc;">0,35</div>
<div style="position:absolute;left:1388px;top:587px;width:1px;height:6px;background:#d8d8d8"></div>
<div class="t" style="left:1374.34px;top:596.77px;font-size:14.44px;color:#dcdcdc;">0,35</div>
<div style="position:absolute;left:1009px;top:248px;width:6px;height:2px;background:#d8d8d8"></div>
<div class="t" style="left:987.92px;top:241.47px;font-size:14.44px;color:#dcdcdc;">0,4</div>
<div style="position:absolute;left:1441px;top:587px;width:1px;height:6px;background:#d8d8d8"></div>
<div class="t" style="left:1431.56px;top:596.77px;font-size:14.44px;color:#dcdcdc;">0,4</div>
<div style="position:absolute;left:1009px;top:206px;width:6px;height:2px;background:#d8d8d8"></div>
<div class="t" style="left:979.89px;top:199.22px;font-size:14.44px;color:#dcdcdc;">0,45</div>
<div style="position:absolute;left:1494px;top:587px;width:1px;height:6px;background:#d8d8d8"></div>
<div class="t" style="left:1480.74px;top:596.77px;font-size:14.44px;color:#dcdcdc;">0,45</div>
<div style="position:absolute;left:1009px;top:164px;width:6px;height:2px;background:#d8d8d8"></div>
<div class="t" style="left:987.92px;top:156.97px;font-size:14.44px;color:#dcdcdc;">0,5</div>
<div style="position:absolute;left:1548px;top:587px;width:1px;height:6px;background:#d8d8d8"></div>
<div class="t" style="left:1537.96px;top:596.77px;font-size:14.44px;color:#dcdcdc;">0,5</div>
<div style="position:absolute;left:1009px;top:121px;width:6px;height:2px;background:#d8d8d8"></div>
<div class="t" style="left:979.89px;top:114.72px;font-size:14.44px;color:#dcdcdc;">0,55</div>
<div style="position:absolute;left:1601px;top:587px;width:1px;height:6px;background:#d8d8d8"></div>
<div class="t" style="left:1587.14px;top:596.77px;font-size:14.44px;color:#dcdcdc;">0,55</div>
<div style="position:absolute;left:1400px;top:553px;width:252px;height:28px;background:#2e2e2e"></div>
<div class="t" style="left:1401.00px;top:557.13px;font-size:21.11px;color:#f4f4f4;transform:scaleX(0.9278);">Gamut Coverage:  93,8%</div>
<div class="t" style="left:12.00px;top:667.25px;font-size:28.06px;color:#f2f2f2;transform:scaleX(1.0639);">Current Reading</div>
<div class="t" style="left:12.00px;top:742.95px;font-size:22.50px;color:#f2f2f2;transform:scaleX(1.1020);">x: 0,3095</div>
<div class="t" style="left:169.00px;top:742.95px;font-size:22.50px;color:#f2f2f2;transform:scaleX(1.1020);">y: 0,3214</div>
<div class="t" style="left:12.00px;top:785.45px;font-size:22.50px;color:#f2f2f2;transform:scaleX(1.0992);">fL: 144,47</div>
<div class="t" style="left:12.00px;top:827.45px;font-size:22.50px;color:#f2f2f2;transform:scaleX(1.1667);">cd/m²: 495</div>
<div class="t" style="left:423.40px;top:644.04px;font-size:14.72px;color:#d4d4d4;transform:scaleX(0.9193);">RGB Balance</div>
<div style="position:absolute;left:352px;top:662px;width:252px;height:186px;background:#232323"></div>
<div style="position:absolute;left:352px;top:662px;width:253px;height:2px;background:#909090"></div>
<div style="position:absolute;left:352px;top:662px;width:2px;height:186px;background:#909090"></div>
<div style="position:absolute;left:604px;top:662px;width:1px;height:186px;background:#909090"></div>
<div style="position:absolute;left:352px;top:848px;width:253px;height:1px;background:#a0a0a0"></div>
<div style="position:absolute;left:352px;top:848px;width:1px;height:6px;background:#d0d0d0"></div>
<div style="position:absolute;left:604px;top:848px;width:1px;height:6px;background:#d0d0d0"></div>
<div style="position:absolute;left:346px;top:695px;width:258px;height:1px;background:#8f8f8f"></div>
<div style="position:absolute;left:346px;top:695px;width:6px;height:2px;background:#d8d8d8"></div>
<div class="t" style="left:331.71px;top:687.67px;font-size:15.28px;color:#dcdcdc;transform:scaleX(0.9000);">20</div>
<div style="position:absolute;left:346px;top:756px;width:258px;height:1px;background:#8f8f8f"></div>
<div style="position:absolute;left:346px;top:756px;width:6px;height:2px;background:#d8d8d8"></div>
<div class="t" style="left:339.35px;top:748.67px;font-size:15.28px;color:#dcdcdc;transform:scaleX(0.9000);">0</div>
<div style="position:absolute;left:346px;top:818px;width:258px;height:1px;background:#8f8f8f"></div>
<div style="position:absolute;left:346px;top:818px;width:6px;height:2px;background:#d8d8d8"></div>
<div class="t" style="left:327.13px;top:810.67px;font-size:15.28px;color:#dcdcdc;transform:scaleX(0.9000);">-20</div>
<div class="t" style="left:459.00px;top:852.54px;font-size:14.72px;color:#dcdcdc;transform:scaleX(0.9621);">100W</div>
<div style="position:absolute;left:376px;top:721px;width:69px;height:36px;box-sizing:border-box;border:1px solid #000;background:linear-gradient(#ff5050 0%,#ff0000 25%,#e00000 70%,#900000 100%)"></div>
<div style="position:absolute;left:444px;top:756px;width:69px;height:19px;box-sizing:border-box;border:1px solid #000;background:linear-gradient(#2a9a2a 0%,#008000 40%,#006a00 100%)"></div>
<div style="position:absolute;left:512px;top:683px;width:69px;height:74px;box-sizing:border-box;border:1px solid #000;background:linear-gradient(#5050ff 0%,#0000ff 20%,#0000f0 60%,#000090 100%)"></div>
<div class="t" style="left:767.10px;top:636.89px;font-size:14.31px;color:#d4d4d4;transform:scaleX(0.9625);">CIE 1931 xy</div>
<div style="position:absolute;left:634px;top:654px;width:342px;height:205px;box-sizing:border-box;border:2px solid #8a8a8a;background:linear-gradient(to top right,rgba(140,240,255,0.85) 0%,rgba(255,255,255,0) 45%,rgba(255,255,255,0) 55%,rgba(255,255,128,0.85) 100%),linear-gradient(to bottom right,#5aff9a 0%,#f4fff4 50%,#ff90a0 100%)"></div>
<canvas id="xy" width="338" height="201" style="position:absolute;left:636px;top:656px"></canvas>
<script>
(function(){
var cv=document.getElementById('xy');var ctx=cv.getContext('2d');var W=cv.width,H=cv.height;
var img=ctx.createImageData(W,H);var d=img.data;
var M=[[2.4934969,-0.9313836,-0.4027108],[-0.8294890,1.7626641,0.0236247],[0.0358458,-0.0761724,0.9568845]];
var XC=0.315570, YC=0.387750, SX=2300.000000, SY=1600.000000, GAM=0.500000;
for(var py=0;py<H;py++){for(var p=0;p<W;p++){
  var x=XC+(p+0.5-W/2)/SX, y=YC-(py+0.5-H/2)/SY;
  var X=x/y,Y=1,Z=(1-x-y)/y;
  var r=M[0][0]*X+M[0][1]*Y+M[0][2]*Z, g=M[1][0]*X+M[1][1]*Y+M[1][2]*Z, b=M[2][0]*X+M[2][1]*Y+M[2][2]*Z;
  var mn=Math.min(r,g,b); if(mn<0){r-=mn;g-=mn;b-=mn;}
  var m=Math.max(r,g,b); r/=m; g/=m; b/=m;
  r=Math.pow(r,GAM);g=Math.pow(g,GAM);b=Math.pow(b,GAM);
  var o=(py*W+p)*4; d[o]=r*255;d[o+1]=g*255;d[o+2]=b*255;d[o+3]=255;
}}
ctx.putImageData(img,0,0);
})();
</script>
<div style="position:absolute;left:797.5px;top:747.5px;width:14px;height:14px;box-sizing:border-box;border:2px solid #000"></div>
<div style="position:absolute;left:773px;top:841px;width:10px;height:10px;box-sizing:border-box;border-radius:50%;border:1px solid #222;background:#b8b8b8"></div>
<div style="position:absolute;left:776.5px;top:837px;width:10px;height:10px;box-sizing:border-box;border-radius:50%;border:1px solid #222;background:#ffffff"></div>
<div style="position:absolute;left:993px;top:639px;width:634px;height:41px;background:linear-gradient(#2e2e2e 0%,#2e2e2e 49%,#151515 50%,#141414 100%)"></div>
<div style="position:absolute;left:993px;top:639px;width:15px;height:41px;background:#000"></div>
<div style="position:absolute;left:993px;top:680px;width:634px;height:163px;overflow:hidden">
<div style="position:absolute;left:0;top:0.0px;width:634px;height:37.2px;background:#404040"></div>
<div style="position:absolute;left:0;top:0.0px;width:15px;height:37.2px;background:#1f1f1f"></div>
<div style="position:absolute;left:0;top:37.2px;width:634px;height:37.2px;background:#7c7c7c"></div>
<div style="position:absolute;left:0;top:37.2px;width:15px;height:37.2px;background:#2a2a2a"></div>
<div style="position:absolute;left:0;top:74.4px;width:634px;height:37.2px;background:#404040"></div>
<div style="position:absolute;left:0;top:74.4px;width:15px;height:37.2px;background:#1f1f1f"></div>
<div style="position:absolute;left:0;top:111.6px;width:634px;height:37.2px;background:#7c7c7c"></div>
<div style="position:absolute;left:0;top:111.6px;width:15px;height:37.2px;background:#2a2a2a"></div>
<div style="position:absolute;left:0;top:148.8px;width:634px;height:37.2px;background:#404040"></div>
<div style="position:absolute;left:0;top:148.8px;width:15px;height:37.2px;background:#1f1f1f"></div>
</div>
<div style="position:absolute;left:993px;top:680px;width:634px;height:163px;overflow:hidden">
<div class="t" style="left:19.00px;top:9.14px;font-size:22.64px;color:#f0f0f0;transform:scaleX(0.675)">x: CIE31</div>
<div class="t" style="left:91.00px;top:9.14px;font-size:22.64px;color:#f0f0f0;transform:scaleX(0.725)">0,3087</div>
<div class="t" style="left:170.00px;top:9.14px;font-size:22.64px;color:#f0f0f0;transform:scaleX(0.725)">0,6715</div>
<div class="t" style="left:240.50px;top:9.14px;font-size:22.64px;color:#f0f0f0;transform:scaleX(0.725)">0,2722</div>
<div class="t" style="left:319.50px;top:9.14px;font-size:22.64px;color:#f0f0f0;transform:scaleX(0.725)">0,1507</div>
<div class="t" style="left:389.00px;top:9.14px;font-size:22.64px;color:#f0f0f0;transform:scaleX(0.725)">0,2057</div>
<div class="t" style="left:468.50px;top:9.14px;font-size:22.64px;color:#f0f0f0;transform:scaleX(0.725)">0,3179</div>
<div class="t" style="left:539.50px;top:9.14px;font-size:22.64px;color:#f0f0f0;transform:scaleX(0.725)">0,4339</div>
<div class="t" style="left:619.00px;top:9.14px;font-size:22.64px;color:#f0f0f0;transform:scaleX(0.725)">0,3</div>
<div class="t" style="left:19.00px;top:46.34px;font-size:22.64px;color:#f0f0f0;transform:scaleX(0.675)">y: CIE31</div>
<div class="t" style="left:91.00px;top:46.34px;font-size:22.64px;color:#f0f0f0;transform:scaleX(0.725)">0,3201</div>
<div class="t" style="left:170.00px;top:46.34px;font-size:22.64px;color:#f0f0f0;transform:scaleX(0.725)">0,3205</div>
<div class="t" style="left:240.50px;top:46.34px;font-size:22.64px;color:#f0f0f0;transform:scaleX(0.725)">0,6771</div>
<div class="t" style="left:319.50px;top:46.34px;font-size:22.64px;color:#f0f0f0;transform:scaleX(0.725)">0,0700</div>
<div class="t" style="left:389.00px;top:46.34px;font-size:22.64px;color:#f0f0f0;transform:scaleX(0.725)">0,3209</div>
<div class="t" style="left:468.50px;top:46.34px;font-size:22.64px;color:#f0f0f0;transform:scaleX(0.725)">0,1463</div>
<div class="t" style="left:539.50px;top:46.34px;font-size:22.64px;color:#f0f0f0;transform:scaleX(0.725)">0,5331</div>
<div class="t" style="left:619.00px;top:46.34px;font-size:22.64px;color:#f0f0f0;transform:scaleX(0.725)">0,3</div>
<div class="t" style="left:19.00px;top:83.54px;font-size:22.64px;color:#f0f0f0;transform:scaleX(0.675)">Y</div>
<div class="t" style="left:91.00px;top:83.54px;font-size:22.64px;color:#f0f0f0;transform:scaleX(0.725)">255,2721</div>
<div class="t" style="left:170.00px;top:83.54px;font-size:22.64px;color:#f0f0f0;transform:scaleX(0.725)">50,4506</div>
<div class="t" style="left:240.50px;top:83.54px;font-size:22.64px;color:#f0f0f0;transform:scaleX(0.725)">171,4735</div>
<div class="t" style="left:319.50px;top:83.54px;font-size:22.64px;color:#f0f0f0;transform:scaleX(0.725)">24,0853</div>
<div class="t" style="left:389.00px;top:83.54px;font-size:22.64px;color:#f0f0f0;transform:scaleX(0.725)">198,4562</div>
<div class="t" style="left:468.50px;top:83.54px;font-size:22.64px;color:#f0f0f0;transform:scaleX(0.725)">82,0404</div>
<div class="t" style="left:539.50px;top:83.54px;font-size:22.64px;color:#f0f0f0;transform:scaleX(0.725)">259,5967</div>
<div class="t" style="left:619.00px;top:83.54px;font-size:22.64px;color:#f0f0f0;transform:scaleX(0.725)">495</div>
<div class="t" style="left:19.00px;top:120.74px;font-size:22.64px;color:#f0f0f0;transform:scaleX(0.675)">Target Y</div>
<div class="t" style="left:91.00px;top:120.74px;font-size:22.64px;color:#f0f0f0;transform:scaleX(0.725)">255,2721</div>
<div class="t" style="left:170.00px;top:120.74px;font-size:22.64px;color:#f0f0f0;transform:scaleX(0.725)">53,4896</div>
<div class="t" style="left:240.50px;top:120.74px;font-size:22.64px;color:#f0f0f0;transform:scaleX(0.725)">184,1830</div>
<div class="t" style="left:319.50px;top:120.74px;font-size:22.64px;color:#f0f0f0;transform:scaleX(0.725)">17,5995</div>
<div class="t" style="left:389.00px;top:120.74px;font-size:22.64px;color:#f0f0f0;transform:scaleX(0.725)">201,7825</div>
<div class="t" style="left:468.50px;top:120.74px;font-size:22.64px;color:#f0f0f0;transform:scaleX(0.725)">71,0891</div>
<div class="t" style="left:539.50px;top:120.74px;font-size:22.64px;color:#f0f0f0;transform:scaleX(0.725)">237,6726</div>
<div class="t" style="left:619.00px;top:120.74px;font-size:22.64px;color:#f0f0f0;transform:scaleX(0.725)">495</div>
<div class="t" style="left:19.00px;top:157.94px;font-size:22.64px;color:#f0f0f0;transform:scaleX(0.675)">ΔE 2000</div>
<div class="t" style="left:91.00px;top:157.94px;font-size:22.64px;color:#f0f0f0;transform:scaleX(0.725)">13,0000</div>
<div class="t" style="left:170.00px;top:157.94px;font-size:22.64px;color:#f0f0f0;transform:scaleX(0.725)">1,9307</div>
<div class="t" style="left:240.50px;top:157.94px;font-size:22.64px;color:#f0f0f0;transform:scaleX(0.725)">2,0143</div>
<div class="t" style="left:319.50px;top:157.94px;font-size:22.64px;color:#f0f0f0;transform:scaleX(0.725)">3,8000</div>
<div class="t" style="left:389.00px;top:157.94px;font-size:22.64px;color:#f0f0f0;transform:scaleX(0.725)">8,8166</div>
<div class="t" style="left:468.50px;top:157.94px;font-size:22.64px;color:#f0f0f0;transform:scaleX(0.725)">3,7983</div>
<div class="t" style="left:539.50px;top:157.94px;font-size:22.64px;color:#f0f0f0;transform:scaleX(0.725)">3,3033</div>
<div class="t" style="left:619.00px;top:157.94px;font-size:22.64px;color:#f0f0f0;transform:scaleX(0.725)">14,9</div>
</div>
<div style="position:absolute;left:1084px;top:640px;width:543px;height:40px;overflow:hidden"><div class="t" style="left:0;top:11.01px;font-size:18.89px;color:#f4f4f4;transform:scaleX(0.84);-webkit-text-stroke:0.35px #f4f4f4">White</div></div>
<div style="position:absolute;left:1163px;top:640px;width:464px;height:40px;overflow:hidden"><div class="t" style="left:0;top:11.01px;font-size:18.89px;color:#f4f4f4;transform:scaleX(0.84);-webkit-text-stroke:0.35px #f4f4f4">Red</div></div>
<div style="position:absolute;left:1233.5px;top:640px;width:393.5px;height:40px;overflow:hidden"><div class="t" style="left:0;top:11.01px;font-size:18.89px;color:#f4f4f4;transform:scaleX(0.84);-webkit-text-stroke:0.35px #f4f4f4">Green</div></div>
<div style="position:absolute;left:1312.5px;top:640px;width:314.5px;height:40px;overflow:hidden"><div class="t" style="left:0;top:11.01px;font-size:18.89px;color:#f4f4f4;transform:scaleX(0.84);-webkit-text-stroke:0.35px #f4f4f4">Blue</div></div>
<div style="position:absolute;left:1382px;top:640px;width:245px;height:40px;overflow:hidden"><div class="t" style="left:0;top:11.01px;font-size:18.89px;color:#f4f4f4;transform:scaleX(0.84);-webkit-text-stroke:0.35px #f4f4f4">Cyan</div></div>
<div style="position:absolute;left:1461.5px;top:640px;width:165.5px;height:40px;overflow:hidden"><div class="t" style="left:0;top:11.01px;font-size:18.89px;color:#f4f4f4;transform:scaleX(0.84);-webkit-text-stroke:0.35px #f4f4f4">Magenta</div></div>
<div style="position:absolute;left:1532.5px;top:640px;width:94.5px;height:40px;overflow:hidden"><div class="t" style="left:0;top:11.01px;font-size:18.89px;color:#f4f4f4;transform:scaleX(0.84);-webkit-text-stroke:0.35px #f4f4f4">Yellow</div></div>
<div style="position:absolute;left:1612px;top:640px;width:15px;height:40px;overflow:hidden"><div class="t" style="left:0;top:11.01px;font-size:18.89px;color:#f4f4f4;transform:scaleX(0.84);-webkit-text-stroke:0.35px #f4f4f4">10</div></div>
<div style="position:absolute;left:1627px;top:680px;width:17px;height:163px;background:#4a4a4a;border-radius:3px"></div>
<div style="position:absolute;left:1629px;top:682px;width:13px;height:20px;box-sizing:border-box;border-radius:3px;background:linear-gradient(#8a8a8a,#6a6a6a)"></div>
<div style="position:absolute;left:1630px;top:687px;width:0;height:0;border-left:5.5px solid transparent;border-right:5.5px solid transparent;border-bottom:7px solid #3a3a3a"></div>
<div style="position:absolute;left:1630px;top:704px;width:12px;height:90px;border-radius:6px;background:#3c3c3c"></div>
<div style="position:absolute;left:1629px;top:821px;width:13px;height:20px;box-sizing:border-box;border-radius:3px;background:linear-gradient(#8a8a8a,#6a6a6a)"></div>
<div style="position:absolute;left:1630px;top:827px;width:0;height:0;border-left:5.5px solid transparent;border-right:5.5px solid transparent;border-top:7px solid #3a3a3a"></div>
<div style="position:absolute;left:1008px;top:843px;width:619px;height:23px;background:#4a4a4a"></div>
<div style="position:absolute;left:1008px;top:865px;width:619px;height:2px;background:#5a5a5a"></div>
<div style="position:absolute;left:1010px;top:845px;width:14px;height:19px;box-sizing:border-box;border-radius:3px;background:linear-gradient(#8a8a8a,#6a6a6a)"></div>
<div style="position:absolute;left:1013px;top:849px;width:0;height:0;border-top:5.5px solid transparent;border-bottom:5.5px solid transparent;border-right:7px solid #3a3a3a"></div>
<div style="position:absolute;left:1027px;top:845px;width:530px;height:19px;border-radius:9px;background:#3c3c3c"></div>
<div style="position:absolute;left:1611px;top:845px;width:14px;height:19px;box-sizing:border-box;border-radius:3px;background:linear-gradient(#8a8a8a,#6a6a6a)"></div>
<div style="position:absolute;left:1616px;top:849px;width:0;height:0;border-top:5.5px solid transparent;border-bottom:5.5px solid transparent;border-left:7px solid #3a3a3a"></div>
<div style="position:absolute;left:-6px;top:875px;width:160px;height:75px;border-radius:6px 6px 0 0;background:linear-gradient(#a8a8a8 0%,#9a9a9a 15%,#7a7a7a 60%,#606060 100%)"></div>
<div style="position:absolute;left:5px;top:882px;width:143px;height:45px;box-sizing:border-box;border-radius:6px;background:#c0c0c0;box-shadow:inset 0 1px 2px rgba(0,0,0,0.5), 0 1px 0 rgba(255,255,255,0.25)"></div>
<div class="t" style="left:58.39px;top:936.01px;font-size:14.17px;color:#262626;-webkit-text-stroke:0.3px #262626;">White</div>
<div style="position:absolute;left:157px;top:875px;width:154px;height:75px;border-radius:6px 6px 0 0;background:linear-gradient(#a8a8a8 0%,#9a9a9a 15%,#7a7a7a 60%,#606060 100%)"></div>
<div style="position:absolute;left:162px;top:882px;width:143px;height:45px;box-sizing:border-box;border-radius:6px;background:#c00000;box-shadow:inset 0 1px 2px rgba(0,0,0,0.5), 0 1px 0 rgba(255,255,255,0.25)"></div>
<div class="t" style="left:220.51px;top:936.01px;font-size:14.17px;color:#262626;-webkit-text-stroke:0.3px #262626;">Red</div>
<div style="position:absolute;left:315px;top:875px;width:154px;height:75px;border-radius:6px 6px 0 0;background:linear-gradient(#a8a8a8 0%,#9a9a9a 15%,#7a7a7a 60%,#606060 100%)"></div>
<div style="position:absolute;left:320px;top:882px;width:143px;height:45px;box-sizing:border-box;border-radius:6px;background:#00c000;box-shadow:inset 0 1px 2px rgba(0,0,0,0.5), 0 1px 0 rgba(255,255,255,0.25)"></div>
<div class="t" style="left:371.81px;top:936.01px;font-size:14.17px;color:#262626;-webkit-text-stroke:0.3px #262626;">Green</div>
<div style="position:absolute;left:472px;top:875px;width:154px;height:75px;border-radius:6px 6px 0 0;background:linear-gradient(#a8a8a8 0%,#9a9a9a 15%,#7a7a7a 60%,#606060 100%)"></div>
<div style="position:absolute;left:477px;top:882px;width:143px;height:45px;box-sizing:border-box;border-radius:6px;background:#0000c0;box-shadow:inset 0 1px 2px rgba(0,0,0,0.5), 0 1px 0 rgba(255,255,255,0.25)"></div>
<div class="t" style="left:534.32px;top:936.01px;font-size:14.17px;color:#262626;-webkit-text-stroke:0.3px #262626;">Blue</div>
<div style="position:absolute;left:630px;top:875px;width:154px;height:75px;border-radius:6px 6px 0 0;background:linear-gradient(#a8a8a8 0%,#9a9a9a 15%,#7a7a7a 60%,#606060 100%)"></div>
<div style="position:absolute;left:635px;top:882px;width:143px;height:45px;box-sizing:border-box;border-radius:6px;background:#00c0c0;box-shadow:inset 0 1px 2px rgba(0,0,0,0.5), 0 1px 0 rgba(255,255,255,0.25)"></div>
<div class="t" style="left:689.96px;top:936.01px;font-size:14.17px;color:#262626;-webkit-text-stroke:0.3px #262626;">Cyan</div>
<div style="position:absolute;left:788px;top:875px;width:154px;height:75px;border-radius:6px 6px 0 0;background:linear-gradient(#a8a8a8 0%,#9a9a9a 15%,#7a7a7a 60%,#606060 100%)"></div>
<div style="position:absolute;left:793px;top:882px;width:143px;height:45px;box-sizing:border-box;border-radius:6px;background:#c000c0;box-shadow:inset 0 1px 2px rgba(0,0,0,0.5), 0 1px 0 rgba(255,255,255,0.25)"></div>
<div class="t" style="left:836.94px;top:936.01px;font-size:14.17px;color:#262626;-webkit-text-stroke:0.3px #262626;">Magenta</div>
<div style="position:absolute;left:946px;top:875px;width:154px;height:75px;border-radius:6px 6px 0 0;background:linear-gradient(#a8a8a8 0%,#9a9a9a 15%,#7a7a7a 60%,#606060 100%)"></div>
<div style="position:absolute;left:951px;top:882px;width:143px;height:45px;box-sizing:border-box;border-radius:6px;background:#c0c000;box-shadow:inset 0 1px 2px rgba(0,0,0,0.5), 0 1px 0 rgba(255,255,255,0.25)"></div>
<div class="t" style="left:1002.28px;top:936.01px;font-size:14.17px;color:#262626;-webkit-text-stroke:0.3px #262626;">Yellow</div>
<div style="position:absolute;left:1104px;top:875px;width:155px;height:75px;border-radius:6px 6px 0 0;background:linear-gradient(#202020,#2c2c2c)"></div>
<div style="position:absolute;left:1110px;top:882px;width:143px;height:45px;border-radius:6px;background:#ffffff"></div>
<div class="t" style="left:1162.50px;top:936.01px;font-size:14.17px;color:#ffffff;font-weight:bold;">100W</div>
<div style="position:absolute;left:1263px;top:876px;width:60px;height:22px;border-radius:6px 6px 0 0;background:linear-gradient(#a8a8a8,#7a7a7a)"></div>
<div style="position:absolute;left:1280px;top:877px;width:26px;height:26px;border-radius:50%;background:radial-gradient(circle at 50% 40%,#7e7e7e,#8e8e8e 70%,rgba(150,150,150,0) 100%)"></div>
<div style="position:absolute;left:1287px;top:882px;width:0;height:0;border-left:6px solid transparent;border-right:6px solid transparent;border-bottom:6px solid #2a2a2a"></div>
<div style="position:absolute;left:1263px;top:898px;width:60px;height:1px;background:#3a3a3a"></div>
<div style="position:absolute;left:1263px;top:899px;width:60px;height:50px;background:linear-gradient(#9a9a9a,#6e6e6e)"></div>
<div style="position:absolute;left:1274px;top:906px;width:37px;height:40px;box-sizing:border-box;border:3px solid #2a2a2a;border-radius:7px;background:linear-gradient(#a8a8a8 0%,#a0a0a0 45%,#808080 55%,#8a8a8a 100%)"></div>
<div style="position:absolute;left:1285px;top:917px;width:15px;height:15px;background:#0a0a0a"></div>
<div style="position:absolute;left:1324px;top:875px;width:58px;height:38px;background:linear-gradient(#b0b0b0 0%,#a0a0a0 30%,#808080 70%,#6a6a6a 100%)"></div>
<div style="position:absolute;left:1341.0px;top:882px;width:24px;height:24px;border-radius:50%;background:linear-gradient(#7a7a7a,#a6a6a6)"></div>
<div style="position:absolute;left:1383px;top:875px;width:55px;height:38px;background:linear-gradient(#b0b0b0 0%,#a0a0a0 30%,#808080 70%,#6a6a6a 100%)"></div>
<div style="position:absolute;left:1398.5px;top:882px;width:24px;height:24px;border-radius:50%;background:linear-gradient(#7a7a7a,#a6a6a6)"></div>
<div style="position:absolute;left:1439px;top:875px;width:55px;height:38px;background:linear-gradient(#b0b0b0 0%,#a0a0a0 30%,#808080 70%,#6a6a6a 100%)"></div>
<div style="position:absolute;left:1454.5px;top:882px;width:24px;height:24px;border-radius:50%;background:linear-gradient(#7a7a7a,#a6a6a6)"></div>
<div style="position:absolute;left:1496px;top:875px;width:55px;height:38px;background:linear-gradient(#b0b0b0 0%,#a0a0a0 30%,#808080 70%,#6a6a6a 100%)"></div>
<div style="position:absolute;left:1511.5px;top:882px;width:24px;height:24px;border-radius:50%;background:linear-gradient(#7a7a7a,#a6a6a6)"></div>
<div style="position:absolute;left:1552px;top:875px;width:55px;height:38px;background:linear-gradient(#b0b0b0 0%,#a0a0a0 30%,#808080 70%,#6a6a6a 100%)"></div>
<div style="position:absolute;left:1567.5px;top:882px;width:24px;height:24px;border-radius:50%;background:linear-gradient(#7a7a7a,#a6a6a6)"></div>
<div style="position:absolute;left:1382px;top:875px;width:1px;height:38px;background:#2a2a2a"></div>
<div style="position:absolute;left:1438px;top:875px;width:1px;height:38px;background:#2a2a2a"></div>
<div style="position:absolute;left:1494px;top:875px;width:2px;height:38px;background:#2a2a2a"></div>
<div style="position:absolute;left:1551px;top:875px;width:1px;height:38px;background:#2a2a2a"></div>
<div style="position:absolute;left:1348px;top:889px;width:10px;height:10px;background:#2a2a2a"></div>
<svg style="position:absolute;left:1406px;top:889px" width="12" height="13" viewBox="0 0 12 13"><path d="M1 0.5 L11.5 6.5 L1 12.5 Z" fill="#2a2a2a"/></svg>
<svg style="position:absolute;left:1458px;top:888px" width="18" height="14" viewBox="0 0 18 14"><path d="M4.5 1 L1.5 1 L1.5 13 L4.5 13" stroke="#2a2a2a" stroke-width="2.6" fill="none"/><path d="M13.5 1 L16.5 1 L16.5 13 L13.5 13" stroke="#2a2a2a" stroke-width="2.6" fill="none"/><rect x="6.5" y="6" width="2" height="2" fill="#2a2a2a"/><rect x="9.5" y="6" width="2" height="2" fill="#2a2a2a"/></svg>
<svg style="position:absolute;left:1514px;top:889px" width="20" height="11" viewBox="0 0 20 11"><ellipse cx="5.3" cy="5.5" rx="3.8" ry="3.3" stroke="#2a2a2a" stroke-width="2.4" fill="none"/><ellipse cx="14.7" cy="5.5" rx="3.8" ry="3.3" stroke="#2a2a2a" stroke-width="2.4" fill="none"/></svg>
<svg style="position:absolute;left:1571px;top:886px" width="17" height="17" viewBox="0 0 17 17"><path d="M3 9 A5.5 5.5 0 0 1 13 5" stroke="#2a2a2a" stroke-width="2.4" fill="none"/><path d="M14 8 A5.5 5.5 0 0 1 4 12" stroke="#2a2a2a" stroke-width="2.4" fill="none"/><path d="M11 2 L15 2 L15 7 Z" fill="#2a2a2a"/><path d="M6 15 L2 15 L2 10 Z" fill="#2a2a2a"/></svg>
<div style="position:absolute;left:1324px;top:914px;width:170px;height:35px;background:linear-gradient(#b0b0b0 0%,#a0a0a0 30%,#888 100%)"></div>
<div style="position:absolute;left:1496px;top:914px;width:161px;height:35px;background:linear-gradient(#b0b0b0 0%,#a0a0a0 30%,#888 100%)"></div>
<div style="position:absolute;left:1494px;top:914px;width:2px;height:35px;background:#2a2a2a"></div>
<div style="position:absolute;left:1351px;top:919px;width:24px;height:26px;border-radius:50%;background:linear-gradient(#7a7a7a,#a6a6a6)"></div>
<div style="position:absolute;left:1617px;top:920px;width:24px;height:26px;border-radius:50%;background:linear-gradient(#7a7a7a,#a6a6a6)"></div>
<svg style="position:absolute;left:1356px;top:926px" width="14" height="14" viewBox="0 0 14 14"><path d="M6 1.5 L1.5 7 L6 12.5 M11.5 1.5 L7 7 L11.5 12.5" stroke="#333" stroke-width="1.9" fill="none"/></svg>
<svg style="position:absolute;left:1623px;top:926px" width="14" height="14" viewBox="0 0 14 14"><path d="M8 1.5 L12.5 7 L8 12.5 M2.5 1.5 L7 7 L2.5 12.5" stroke="#333" stroke-width="1.9" fill="none"/></svg>
<div class="t" style="left:1397.20px;top:919.40px;font-size:28.47px;color:#353535;font-weight:bold;transform:scaleX(0.9109);">Back</div>
<div class="t" style="left:1530.00px;top:919.40px;font-size:28.47px;color:#353535;font-weight:bold;transform:scaleX(1.0371);">Next</div>
<svg style="position:absolute;left:1614px;top:873px" width="40" height="40" viewBox="-20 -20 40 40"><defs><filter id="sh" x="-30%" y="-30%" width="160%" height="160%"><feGaussianBlur in="SourceAlpha" stdDeviation="1.2"/><feOffset dx="1.5" dy="1.5"/><feComponentTransfer><feFuncA type="linear" slope="0.8"/></feComponentTransfer><feMerge><feMergeNode/><feMergeNode in="SourceGraphic"/></feMerge></filter></defs><g filter="url(#sh)" fill="#e00000"><path d="M-2.2 0 L-3 -15.5 Q0 -17 3 -15.5 L2.2 0 Z" transform="rotate(0)"/><path d="M-2.2 0 L-3 -15.5 Q0 -17 3 -15.5 L2.2 0 Z" transform="rotate(60)"/><path d="M-2.2 0 L-3 -15.5 Q0 -17 3 -15.5 L2.2 0 Z" transform="rotate(120)"/><path d="M-2.2 0 L-3 -15.5 Q0 -17 3 -15.5 L2.2 0 Z" transform="rotate(180)"/><path d="M-2.2 0 L-3 -15.5 Q0 -17 3 -15.5 L2.2 0 Z" transform="rotate(240)"/><path d="M-2.2 0 L-3 -15.5 Q0 -17 3 -15.5 L2.2 0 Z" transform="rotate(300)"/></g></svg>
</body></html>
